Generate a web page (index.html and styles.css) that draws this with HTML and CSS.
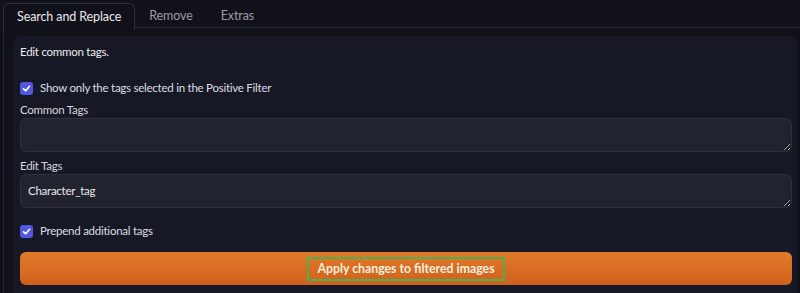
FILE: index.html
```html
<!DOCTYPE html>
<html lang="en">
<head>
    <meta charset="UTF-8">
    <meta name="viewport" content="width=device-width, initial-scale=1.0">
    <title>Dataset Tag Editor</title>
    <link rel="stylesheet" href="styles.css">
</head>
<body>
    <div class="tabs">
        <div class="tab-nav">
            <button class="tab selected">Search and Replace</button>
            <button class="tab">Remove</button>
            <button class="tab">Extras</button>
        </div>

        <div class="tab-body">
            <div class="panel">
                <p class="desc">Edit common tags.</p>

                <label class="check first">
                    <span class="box">
                        <svg width="9" height="9" viewBox="0 0 12 12"><path d="M2 6.5 L5 9 L10 3" fill="none" stroke="#fff" stroke-width="2.2" stroke-linecap="round" stroke-linejoin="round"/></svg>
                    </span>
                    Show only the tags selected in the Positive Filter
                </label>

                <div class="field common">
                    <span class="field-label">Common Tags</span>
                    <textarea class="tag-input" rows="1"></textarea>
                </div>

                <div class="field edit">
                    <span class="field-label">Edit Tags</span>
                    <textarea class="tag-input" rows="1">Character_tag</textarea>
                </div>

                <label class="check second">
                    <span class="box">
                        <svg width="9" height="9" viewBox="0 0 12 12"><path d="M2 6.5 L5 9 L10 3" fill="none" stroke="#fff" stroke-width="2.2" stroke-linecap="round" stroke-linejoin="round"/></svg>
                    </span>
                    Prepend additional tags
                </label>

                <button class="apply"><span class="apply-text">Apply changes to filtered images</span></button>
            </div>
        </div>
    </div>
</body>
</html>
```

FILE: styles.css
```css
* {
    box-sizing: border-box;
    margin: 0;
    padding: 0;
}

body {
    font-family: 'Lato', sans-serif;
    background-color: #111119;
    color: #e4e4e7;
    height: 293px;
    overflow: hidden;
}

.tabs {
    padding: 3px 0 0 3px;
}

.tab-nav {
    display: flex;
    height: 25px;
    border-bottom: 1px solid #2b2c36;
}

.tab {
    background: none;
    border: 1px solid transparent;
    font-family: inherit;
    font-size: 12.5px;
    letter-spacing: -0.1px;
    white-space: nowrap;
    color: #9a9ca6;
    padding: 0 13px;
    height: 25px;
}
.tab.selected {
    color: #e8e8ec;
    border-color: #2e303b;
    border-bottom: none;
    border-radius: 6px 6px 0 0;
    background: #111119;
    height: 26px;
    margin-bottom: -1px;
}

.tab-body {
    border-left: 1px solid #24252f;
    padding: 8px 3px 0 9px;
    height: 265px;
}

.panel {
    background: #161925;
    border-radius: 8px 8px 0 0;
    padding: 8px 5px 0 7px;
    height: 100%;
    display: flex;
    flex-direction: column;
    font-size: 11.5px;
    letter-spacing: -0.25px;
}

.desc {
    line-height: 16px;
    color: #ececf0;
}

.check {
    display: flex;
    align-items: center;
    gap: 7px;
    line-height: 16px;
    color: #dcdde2;
}
.check.first {
    margin-top: 20px;
}
.check.second {
    margin-top: 15px;
}
.box {
    width: 13px;
    height: 13px;
    border-radius: 3px;
    background: #5057e0;
    display: flex;
    align-items: center;
    justify-content: center;
}

.field {
    display: flex;
    flex-direction: column;
    margin-top: 6px;
}
.field-label {
    line-height: 16px;
    color: #d6d7dc;
}

.tag-input {
    display: block;
    height: 34px;
    background: #21242f;
    border: 1px solid #2e313d;
    border-radius: 6px;
    color: #e8e8ec;
    font-family: inherit;
    font-size: 11.5px;
    letter-spacing: -0.25px;
    line-height: 16px;
    padding: 8px 7px;
    resize: vertical;
    outline: none;
    color-scheme: dark;
}

.apply {
    margin-top: 13px;
    height: 33px;
    border: none;
    border-radius: 6px;
    background: linear-gradient(to bottom, #e27a2a, #cf601c);
    color: #fbeede;
    font-family: inherit;
    font-size: 12.3px;
    font-weight: bold;
    display: flex;
    align-items: center;
    justify-content: center;
}
.apply-text {
    border: 2px solid #4caf50;
    padding: 1px 8px;
    line-height: 18px;
}
```
